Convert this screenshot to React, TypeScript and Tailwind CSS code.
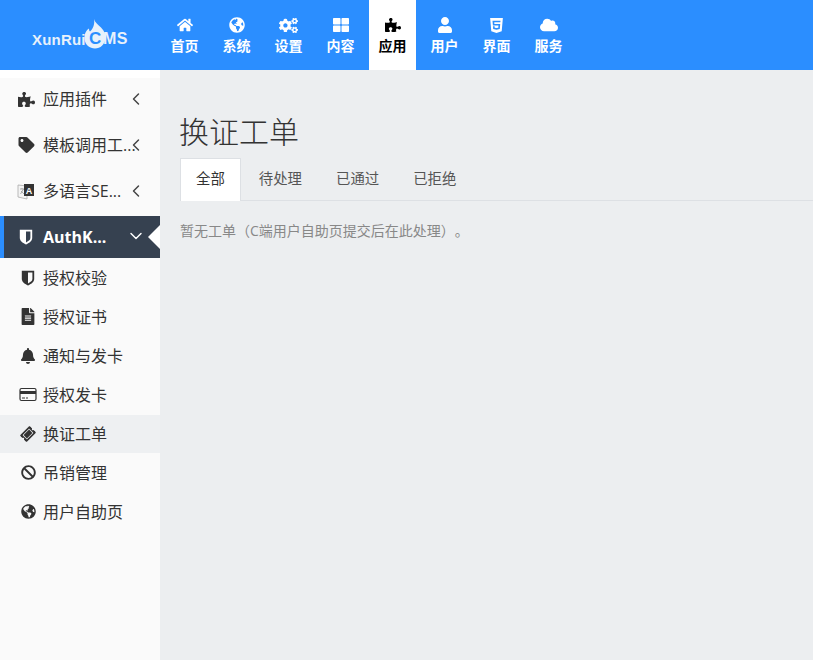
import React from "react";
import { FaHome, FaGlobeAmericas, FaCogs, FaThLarge, FaPuzzlePiece, FaUser, FaHtml5, FaCloud, FaTag, FaFileAlt, FaBell, FaTicketAlt, FaBan } from "react-icons/fa";
import { ChevronLeft, ChevronDown } from "lucide-react";

function Shield({ className = "", inner }: { className?: string; inner: string }) {
  return (
    <svg className={className} width="14" height="16" viewBox="0 0 14 16" fill="currentColor">
      <path d="M.8.8h12.4v8.2c0 3.1-3.4 5.2-6.2 6.4C4.2 14.2.8 12.1.8 9z" />
      <path d="M7 2.6h4.4V9c0 2-2.400 3.400-4.400 4.400z" fill={inner} />
    </svg>
  );
}
function Card({ className = "" }: { className?: string }) {
  return (
    <svg className={className} width="18" height="15" viewBox="0 0 18 15" fill="none">
      <rect x="1" y="1.500" width="16" height="12" rx="1.500" stroke="#333" strokeWidth="1.200" />
      <rect x="1" y="4" width="16" height="3" fill="#333" />
      <path d="M3 11h3M7 11h2" stroke="#333" />
    </svg>
  );
}
function Lang({ className = "" }: { className?: string }) {
  return (
    <svg className={className} width="18" height="18" viewBox="0 0 18 18">
      <path d="M1 3l9 1v13l-9-2z" fill="#f4f4f4" stroke="#aaa" strokeWidth=".8" />
      <rect x="7" y="2" width="10" height="12" fill="#333" />
      <text x="12" y="12" fontSize="9" fontWeight="700" textAnchor="middle" fill="#fff" fontFamily="Liberation Sans, sans-serif">A</text>
      <path d="M3 7h4M5 6v1M3.500 12l3-5M4 9l3 3" stroke="#999" strokeWidth=".8" fill="none" />
    </svg>
  );
}

const nav = [
  { t: "首页", I: FaHome, s: "text-[16px]" },
  { t: "系统", I: FaGlobeAmericas, s: "text-[16px]" },
  { t: "设置", I: FaCogs, s: "text-[19px]" },
  { t: "内容", I: FaThLarge, s: "text-[16px]" },
  { t: "应用", I: FaPuzzlePiece, active: true, s: "text-[16px]" },
  { t: "用户", I: FaUser, s: "text-[16px]" },
  { t: "界面", I: FaHtml5, s: "text-[17px]" },
  { t: "服务", I: FaCloud, s: "text-[18px]" },
];
const tabs = ["全部", "待处理", "已通过", "已拒绝"];
const rowText = "ml-[7px] whitespace-nowrap";

function Logo() {
  const f = { fontFamily: '"Liberation Sans", sans-serif' };
  return (
    <div className="relative w-[160px] h-[70px] shrink-0">
      <svg className="absolute left-[84px] top-[19px]" width="22" height="30" viewBox="0 0 22 30">
        <path d="M10 0c1 3.500 4 5.500 7 8.500 3.500 3.500 5 7.500 4.500 11-.8 6-5 10-10.500 10S1.300 26 .6 20.500C0 15 2 11.500 5 9.500c0 1.500.4 2.500 1 3C9 10 11 5 10 0z" fill="#e8f1fb" />
      </svg>
      <span className="absolute left-[32px] top-[31px] text-[15px] leading-[17px] font-bold text-[#e8f1fb] whitespace-nowrap tracking-[0.2px]" style={f}>XunRui</span>
      <span className="absolute left-[89px] top-[29px] text-[17px] leading-[20px] font-bold text-[#2b8eff]" style={f}>C</span>
      <span className="absolute left-[103px] top-[30px] text-[16px] leading-[18px] font-bold text-[#e8f1fb] tracking-[0.5px]" style={f}>MS</span>
    </div>
  );
}

export default function App() {
  return (
    <div className="w-[813px] h-[660px] overflow-hidden flex flex-col bg-[#eceef0] text-[#333] [text-spacing-trim:space-all]" style={{ fontFamily: '"Open Sans", "Noto Sans CJK SC", sans-serif' }}>
      <header className="h-[70px] shrink-0 bg-[#2b8eff] flex">
        <Logo />
        <nav className="flex gap-[5px] pl-px">
          {nav.map(({ t, I, active, s }) => (
            <div key={t} className={`w-[47px] h-[70px] flex flex-col items-center pt-[16px] ${active ? "bg-white text-black" : "text-white"}`}>
              <span className="h-[18px] flex items-center"><I className={s} /></span>
              <span className="mt-[2px] text-[14px] leading-[20px] font-bold whitespace-nowrap">{t}</span>
            </div>
          ))}
        </nav>
      </header>
      <div className="flex flex-1 min-h-0">
        <aside className="w-[160px] shrink-0 bg-[#fafafa] border-t-[8px] border-white flex flex-col text-[16px]">
          <div className="h-[46px] flex items-center pl-[18px] pb-[4px] relative">
            <FaPuzzlePiece className="text-[17px] w-[17px]" />
            <span className="ml-[8px] whitespace-nowrap">应用插件</span>
            <ChevronLeft size={20} strokeWidth={1.75} className="absolute left-[126px] top-[11px] text-[#444]" />
          </div>
          <div className="h-[46px] flex items-center pl-[18px] pb-[4px] relative">
            <FaTag className="text-[16px] w-[17px]" />
            <span className="ml-[8px] whitespace-nowrap">模板调用工...</span>
            <ChevronLeft size={20} strokeWidth={1.75} className="absolute left-[126px] top-[11px] text-[#444]" />
          </div>
          <div className="h-[46px] flex items-center pl-[17px] pb-[4px] relative">
            <Lang />
            <span className="ml-[8px] whitespace-nowrap">多语言SE...</span>
            <ChevronLeft size={20} strokeWidth={1.75} className="absolute left-[126px] top-[11px] text-[#444]" />
          </div>
          <div className="h-[42px] bg-[#364150] border-l-[4px] border-[#2b8eff] flex items-center pl-[15px] relative text-white">
            <Shield inner="#364150" />
            <span className="ml-[10px] font-bold whitespace-nowrap">AuthK...</span>
            <ChevronDown size={20} strokeWidth={1.75} className="absolute left-[122px] top-[10px]" />
            <div className="absolute right-0 top-[9px] w-0 h-0 border-y-[12px] border-y-transparent border-r-[12px] border-r-white" />
          </div>
          <div className="h-px" />
          <div className="h-[39px] flex items-center pl-[20px] pb-[2px]"><span className="w-[16px] flex justify-center"><Shield inner="#fafafa" /></span><span className={rowText}>授权校验</span></div>
          <div className="h-[39px] flex items-center pl-[20px] pb-[2px]"><span className="w-[16px] flex justify-center"><FaFileAlt className="text-[17px]" /></span><span className={rowText}>授权证书</span></div>
          <div className="h-[39px] flex items-center pl-[20px] pb-[2px]"><span className="w-[16px] flex justify-center"><FaBell className="text-[16px]" /></span><span className={rowText}>通知与发卡</span></div>
          <div className="h-[39px] flex items-center pl-[20px] pb-[2px]"><span className="w-[16px] flex justify-center"><Card className="shrink-0 -ml-[1px]" /></span><span className={rowText}>授权发卡</span></div>
          <div className="h-[38px] mb-px flex items-center pl-[20px] pb-[1px] bg-[#eef0f2]"><span className="w-[16px] flex justify-center"><FaTicketAlt className="text-[14px] -rotate-45 shrink-0" /></span><span className={rowText}>换证工单</span></div>
          <div className="h-[39px] flex items-center pl-[20px] pb-[2px]"><span className="w-[16px] flex justify-center"><FaBan className="text-[15px]" /></span><span className={rowText}>吊销管理</span></div>
          <div className="h-[39px] flex items-center pl-[20px] pb-[2px]"><span className="w-[16px] flex justify-center"><FaGlobeAmericas className="text-[15px]" /></span><span className={rowText}>用户自助页</span></div>
        </aside>
        <main className="flex-1 pl-[20px] pt-[40px]">
          <h1 className="text-[30px] leading-[44px] font-light text-[#333] -ml-px">换证工单</h1>
          <div className="mt-[4px] h-[43px] flex gap-[2px] border-b border-[#dde0e4]">
            {tabs.map((t, i) => (
              <div key={t} className={`h-[43px] px-[15px] border border-b-0 text-[14.4px] leading-[39px] whitespace-nowrap ${i === 0 ? "bg-white border-[#dde0e4]" : "border-transparent text-[#555]"}`}>{t}</div>
            ))}
          </div>
          <p className="mt-[20px] text-[14px] leading-[20px] text-[#888]">暂无工单（C端用户自助页提交后在此处理）。</p>
        </main>
      </div>
    </div>
  );
}
